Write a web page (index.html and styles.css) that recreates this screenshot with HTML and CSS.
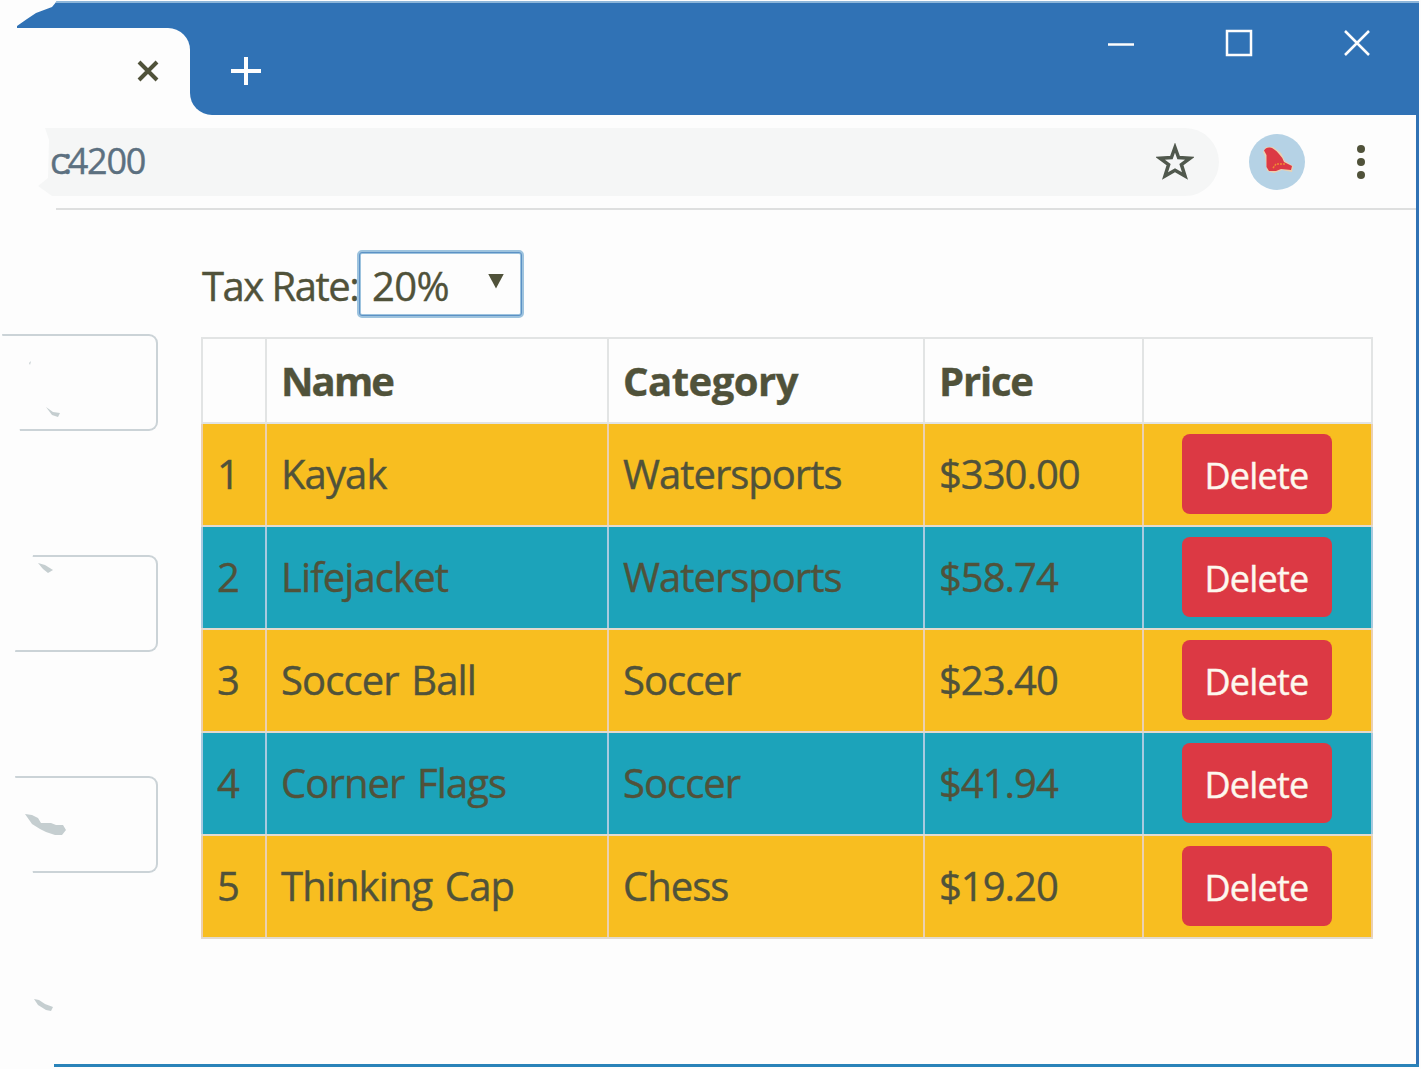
FILE: index.html
```
<!DOCTYPE html>
<html lang="en">
<head>
<meta charset="utf-8">
<title>Products</title>
<link rel="stylesheet" href="styles.css">
</head>
<body>
<div class="window">
  <header class="titlebar">
    <div class="strip"></div>
    <div class="tabs">
      <div class="tab-wrap"><div class="tab">
        <svg class="tab-close" width="24" height="24" viewBox="0 0 24 24"><path d="M3 3L21 21M21 3L3 21"/></svg>
      </div></div>
      <div class="bar">
        <svg class="plus" width="34" height="34" viewBox="0 0 34 34"><path d="M17 3V31M2 17H32"/></svg>
        <div class="controls">
          <svg width="28" height="28" viewBox="0 0 28 28"><path d="M1 15.5H27"/></svg>
          <svg width="28" height="28" viewBox="0 0 28 28"><rect x="2" y="2" width="24" height="24"/></svg>
          <svg width="28" height="28" viewBox="0 0 28 28"><path d="M2 2L26 26M26 2L2 26"/></svg>
        </div>
      </div>
    </div>
  </header>
  <div class="frame">
    <div class="toolbar">
      <div class="address">
        <span class="url"><span class="host">c:</span>4200</span>
        <svg class="star" width="38" height="38" viewBox="0 0 38 38"><path d="M19 4.500L22.600 14.500L34 15.200L25.400 21.600L29 33L19 27.300L9 33L12.600 21.600L4 15.200L15.400 14.500Z"/></svg>
      </div>
      <svg class="avatar" width="56" height="56" viewBox="0 0 56 56">
        <circle cx="28" cy="28" r="28" fill="#b5d2e5"/>
        <path d="M14 18L17 13H24L32 19L36 27L44 32L43 38L33 36L25 39L18 37L16 22Z" fill="#ebd0b0"/>
        <path d="M15 16.500Q17 13 21 13.500Q25 14 30 20Q34 24 35 28L43 32L42 36L32 35L27 37H20L17.500 33V21Z" fill="#dc3944"/>
        <path d="M24 34L27 30H36" fill="none" stroke="#ee8a30" stroke-width="1.500" stroke-dasharray="2 1"/>
      </svg>
      <svg class="menu" width="10" height="36" viewBox="0 0 10 36"><circle cx="5" cy="5" r="4"/><circle cx="5" cy="18" r="4"/><circle cx="5" cy="31" r="4"/></svg>
    </div>
    <div class="rule"></div>
    <div class="page">
      <aside class="side">
        <div class="field f1"><svg width="70" height="93" viewBox="0 0 70 93"><path d="M46 71L53 76L60 77L58 81L52 79ZM29 27L31 25L30 29Z"/></svg></div>
        <div class="field f2"><svg width="70" height="93" viewBox="0 0 70 93"><path d="M38 6L45 8L53 13L48 16L43 12Z"/></svg></div>
        <div class="field f3"><svg width="70" height="93" viewBox="0 0 70 93"><path d="M25 36L32 37L38 40L41 45L51 45L56 47H63L66 52L62 57L55 57L46 54L40 51L32 46Z"/></svg></div>
        <svg class="scrap" width="54" height="20" viewBox="0 0 54 20"><path d="M34 2L39 3L45 7L53 10L51 14L46 13L38 8Z"/></svg>
      </aside>
      <main class="content">
        <div class="tax"><span>Tax Rate:</span><div class="select"><span>20%</span><i class="arrow"></i></div></div>
        <table class="products">
          <colgroup><col class="c1"><col class="c2"><col class="c3"><col class="c4"><col class="c5"></colgroup>
          <thead><tr><th></th><th class="name">Name</th><th class="category">Category</th><th>Price</th><th></th></tr></thead>
          <tbody>
            <tr class="warning"><td>1</td><td class="product">Kayak</td><td>Watersports</td><td>$330.00</td><td class="action"><span class="delete">Delete</span></td></tr>
            <tr class="info"><td>2</td><td class="product">Lifejacket</td><td>Watersports</td><td>$58.74</td><td class="action"><span class="delete">Delete</span></td></tr>
            <tr class="warning"><td>3</td><td class="product">Soccer Ball</td><td>Soccer</td><td>$23.40</td><td class="action"><span class="delete">Delete</span></td></tr>
            <tr class="info"><td>4</td><td class="product">Corner Flags</td><td>Soccer</td><td>$41.94</td><td class="action"><span class="delete">Delete</span></td></tr>
            <tr class="warning"><td>5</td><td class="product">Thinking Cap</td><td>Chess</td><td>$19.20</td><td class="action"><span class="delete">Delete</span></td></tr>
          </tbody>
        </table>
      </main>
    </div>
  </div>
  <div class="bottom"></div>
</div>
</body>
</html>
```
FILE: styles.css
```
* { box-sizing: border-box; }
body { margin: 0; background: #fdfdfd; color: #50523a; font-family: "Open Sans", "Noto Sans", sans-serif; font-size: 40px; letter-spacing: -1px; -webkit-text-stroke: 0.4px currentColor; }
svg { display: block; flex: none; fill: none; }
.window { width: 1421px; height: 1069px; overflow: hidden; display: flex; flex-direction: column; padding: 1px 2px 2px 0; }
.titlebar { height: 114px; flex: none; }
.strip { height: 27px; background: #3072b5; border-top: 2px solid #8db6da; clip-path: polygon(57px 0, 100% 0, 100% 100%, 17px 100%, 17px 25px, 27px 18px, 36px 12px, 44px 9px, 52px 6px); }
.tabs { display: flex; height: 87px; }
.tab-wrap { width: 190px; background: linear-gradient(90deg, #fdfdfd 50%, #3072b5 50%, #3072b5 100%) 0 0 / 100% 50% no-repeat; }
.tab { height: 87px; background: #fdfdfd; border-radius: 0 22px 0 0; display: flex; justify-content: flex-end; padding: 31px 30px 0 0; }
.tab-close { stroke: #50523a; stroke-width: 4; }
.bar { flex: 1; height: 87px; background: #3072b5; border-bottom-left-radius: 22px; display: flex; justify-content: space-between; padding: 0 48px 0 39px; }
.plus { margin-top: 26px; stroke: #fdfdfd; stroke-width: 4; }
.controls { display: flex; gap: 90px; margin-top: 1px; stroke: #fdfdfd; stroke-width: 2.5; }
.frame { flex: 1; border-right: 3px solid #3072b5; }
.toolbar { display: flex; align-items: center; height: 93px; padding: 1px 50px 0 38px; }
.address { width: 1181px; height: 68px; border-radius: 0 34px 34px 0; background: #f5f6f6; display: flex; align-items: center; justify-content: space-between; padding: 0 25px 0 12px; clip-path: polygon(7px 0, 100% 0, 100% 100%, 14px 100%, 0 58px, 10px 50px, 11px 12px); }
.url { margin-top: -3px; font-size: 36px; color: #5c7080; letter-spacing: -1.2px; }
.host { letter-spacing: -4.5px; }
.star { stroke: #50584d; stroke-width: 3.5; }
.avatar { margin-left: 30px; }
.menu { margin-left: auto; fill: #50523a; }
.rule { height: 2px; background: #dedfdf; margin: 0 0 0 56px; }
.page { display: flex; }
.side { width: 201px; padding-top: 124px; }
.field { width: 158px; height: 97px; border: 2px solid #cbd3d7; border-left: 0; border-radius: 0 9px 9px 0; margin-bottom: 124px; }
.field svg, .scrap { fill: #c5ced0; }
.f1 { clip-path: polygon(2px 0, 100% 0, 100% 100%, 20px 100%); }
.f2 { clip-path: polygon(33px 0, 100% 0, 100% 100%, 15px 100%); }
.f3 { clip-path: polygon(15px 0, 100% 0, 100% 100%, 33px 100%); }
.content { width: 1171px; padding-top: 40px; }
.tax { display: flex; align-items: center; height: 67px; margin-bottom: 20px; white-space: nowrap; }
.tax > span { width: 156px; padding-left: 1px; padding-top: 4px; letter-spacing: -1.5px; }
.select { width: 167px; height: 68px; border: 4px solid #9dc3de; border-radius: 5px; outline: 1px solid #5c91c5; outline-offset: -3px; display: flex; align-items: center; justify-content: space-between; padding: 4px 16px 0 11px; letter-spacing: -0.6px; }
.arrow { width: 16px; height: 15px; margin-bottom: 9px; background: #50523a; clip-path: polygon(0 0, 100% 0, 50% 100%); }
.products { width: 1171px; border-collapse: collapse; table-layout: fixed; line-height: 54px; }
.c1 { width: 64px; }
.c2 { width: 342px; }
.c3 { width: 316px; }
.c4 { width: 219px; }
.c5 { width: 229px; }
th, td { border: 2px solid #e2e4e4; padding: 0 14px 2px; text-align: left; white-space: nowrap; }
th { height: 85px; font-weight: 700; letter-spacing: -1.2px; padding-top: 3px; }
.name { letter-spacing: -1.9px; }
.category { letter-spacing: -0.5px; }
.product { letter-spacing: -0.9px; word-spacing: 3px; }
td { height: 103px; border-color: #e2dacf; }
.warning { background: #f8be20; }
.info { background: #1ca3ba; }
.info td { border-left-color: #a8cadf; border-right-color: #a8cadf; }
.warning td { border-left-color: #ebd0b0; border-right-color: #ebd0b0; }
.products .action { padding: 0 2px 2px 0; }
.delete { display: block; width: 150px; height: 80px; margin: 0 auto; border-radius: 8px; background: #dc3944; color: #fdf8ee; font-size: 36px; line-height: 84px; text-align: center; letter-spacing: -0.8px; }
.bottom { height: 3px; margin-left: 54px; background: #2a83b9; }
```
